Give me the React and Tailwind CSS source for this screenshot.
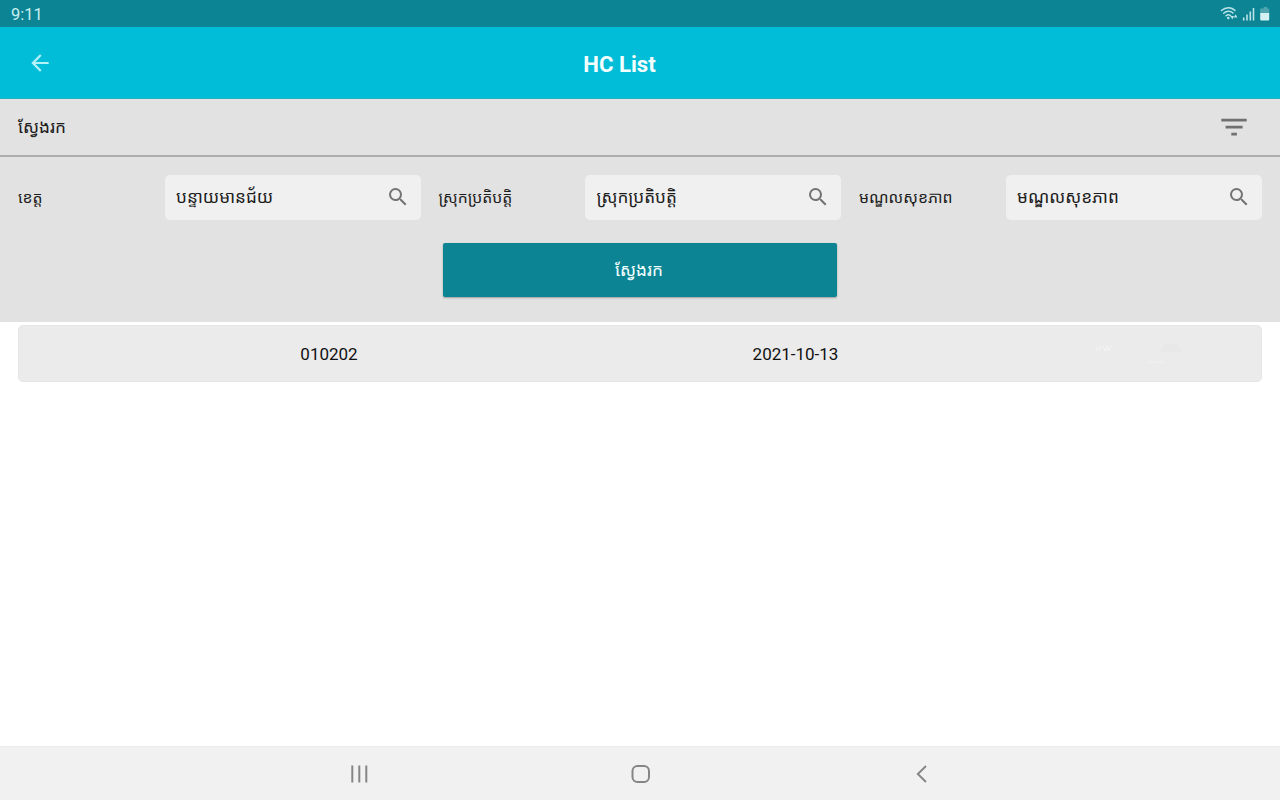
import React from "react";

function SearchIcon() {
  return (
    <svg className="mb-0.5 h-6 w-6 shrink-0" viewBox="0 0 24 24" fill="#737373">
      <path d="M15.5 14h-.79l-.28-.27A6.471 6.471 0 0 0 16 9.5 6.5 6.5 0 1 0 9.500 16c1.61 0 3.09-.59 4.23-1.57l.27.28v.79l5 4.99L20.49 19l-4.99-5zm-6 0C7.01 14 5 11.99 5 9.5S7.01 5 9.500 5 14 7.01 14 9.500 11.99 14 9.500 14z" />
    </svg>
  );
}

function Field({ label, value }) {
  return (
    <div className="flex w-[402.500px] items-center">
      <span className="w-[146.500px] shrink-0 whitespace-nowrap pt-px text-[15.8px] text-[#1c1c1c]">{label}</span>
      <div className="flex h-[45px] w-[256px] items-center justify-between rounded-[5px] bg-[#f0f0f0] pl-[11.500px] pr-[11px]">
        <span className="whitespace-nowrap text-[17.2px] text-[#1c1c1c]">{value}</span>
        <SearchIcon />
      </div>
    </div>
  );
}

function StatusBar() {
  return (
    <div className="flex h-[27px] items-center justify-between bg-[#0c8493] pl-[11px] pr-[8px]">
      <span className="pt-[3px] text-[16.5px] leading-none text-[#c9eef2]">9:11</span>
      <svg className="h-[27px] w-[52px]" viewBox="0 0 52 27" fill="none">
        <g stroke="#b9e3e8" strokeWidth="1.5" strokeLinecap="round">
          <path d="M1.500 10.500C5.500 6.700 11.500 6.700 15 10.500" />
          <path d="M3.700 13.200c2.700-2.500 6.700-2.500 9.200-.3" />
          <path d="M6 15.700c1.400-1.200 3.200-1.200 4.600 0" />
        </g>
        <circle cx="8.300" cy="18" r="1.300" fill="#b9e3e8" />
        <path d="M10.500 16h3.600l-1.800 3.600zM13.800 17.500l1.800-3.300 1.800 3.300z" fill="#b9e3e8" />
        <path d="M23.700 17.500V20.500M27 14.500v6M30.300 11.500v9M33.500 8v12.500" stroke="#b9e3e8" strokeWidth="1.600" />
        <path d="M43.700 7h3.500v1.500h2v5h-9v-5h3.500z" fill="#4ea5b0" />
        <path d="M40.200 13h9v6.500a1 1 0 0 1-1 1h-7a1 1 0 0 1-1-1z" fill="#d5f0f2" />
      </svg>
    </div>
  );
}

export default function App() {
  return (
    <div className="flex h-[800px] w-[1280px] flex-col overflow-hidden bg-white font-['Roboto','Noto_Sans_Khmer','Noto_Sans',sans-serif]">
      <StatusBar />
      <header className="grid h-[72px] grid-cols-[1fr_auto_1fr] items-center border-b border-[#27afbf] bg-[#02bdd8]">
        <svg className="ml-[27px] mt-px h-[26px] w-[26px]" viewBox="0 0 24 24" fill="#b5f1f8">
          <path d="M20 11H7.830l5.590-5.590L12 4l-8 8 8 8 1.410-1.410L7.830 13H20z" />
        </svg>
        <h1 className="pr-[41px] pt-[3px] text-[22.200px] font-bold leading-none text-[#f4ffff]">HC List</h1>
        <span />
      </header>
      <section className="h-[223px] bg-[#e2e2e2]">
        <div className="flex h-[58px] items-center justify-between border-b-2 border-[#acacac] pl-[18px] pr-[33px]">
          <span className="pt-[2px] text-[17.3px] text-[#1c1c1c]">ស្វែងរក</span>
          <svg className="h-[18px] w-[26px]" viewBox="0 0 26 18" fill="#707070">
            <path d="M.3.700h25.400v2.700H.3zM4.600 7.800h17v2.700h-17zM10.300 14.700h5.600v2.700h-5.600z" />
          </svg>
        </div>
        <div className="flex gap-[18px] pl-[18px] pt-[18px]">
          <Field label="ខេត្ត" value="បន្ទាយមានជ័យ" />
          <Field label="ស្រុកប្រតិបត្តិ" value="ស្រុកប្រតិបត្តិ" />
          <Field label="មណ្ឌលសុខភាព" value="មណ្ឌលសុខភាព" />
        </div>
        <button className="mx-auto mt-[23px] flex h-[54px] w-[394px] items-center justify-center rounded-[2px] bg-[#0c8493] pr-[2px] pt-[2px] text-[17.3px] text-[#f0ffff] shadow-[0_1px_2px_rgba(0,0,0,0.3)]">
          ស្វែងរក
        </button>
      </section>
      <main className="flex-1 px-[18px] pt-[3px]">
        <div className="flex h-[57px] items-center rounded-[5px] border border-[#e5e5e5] bg-[#ebebeb] text-[17px] text-[#111]">
          <span className="w-[620px] pt-[2px] text-center">010202</span>
          <span className="w-[313px] pt-[2px] text-center">2021-10-13</span>
          <svg className="ml-[142px] h-[28px] w-[90px]" viewBox="0 0 90 28" fill="none">
            <path d="M3 6v5M6 6v5M9 6l2 5 2-5 2 5 2-5" stroke="#f5f5f5" />
            <path d="M69 4h16v4l3 4H64l5-4z" fill="#e8e8e8" />
            <path d="M54 22h16" stroke="#eeeeee" strokeWidth="2" />
          </svg>
        </div>
      </main>
      <nav className="grid h-[54px] grid-cols-[281px_281px_281px] justify-center border-t border-[#ececec] bg-[#f1f1f1] text-[#858585]">
        <div className="flex items-center justify-center">
          <svg className="h-5 w-5" viewBox="0 0 20 20" fill="none" stroke="currentColor" strokeWidth="2">
            <path d="M3.300 1.500v17M10.300 1.500v17M17.300 1.500v17" />
          </svg>
        </div>
        <div className="flex items-center justify-center">
          <svg className="h-5 w-5" viewBox="0 0 20 20" fill="none" stroke="currentColor" strokeWidth="2">
            <rect x="2.500" y="2" width="16.500" height="16" rx="5" />
          </svg>
        </div>
        <div className="flex items-center justify-center">
          <svg className="h-5 w-5" viewBox="0 0 20 20" fill="none" stroke="currentColor" strokeWidth="1.900">
            <path d="M15 2 6.800 10l8.200 8" />
          </svg>
        </div>
      </nav>
    </div>
  );
}
